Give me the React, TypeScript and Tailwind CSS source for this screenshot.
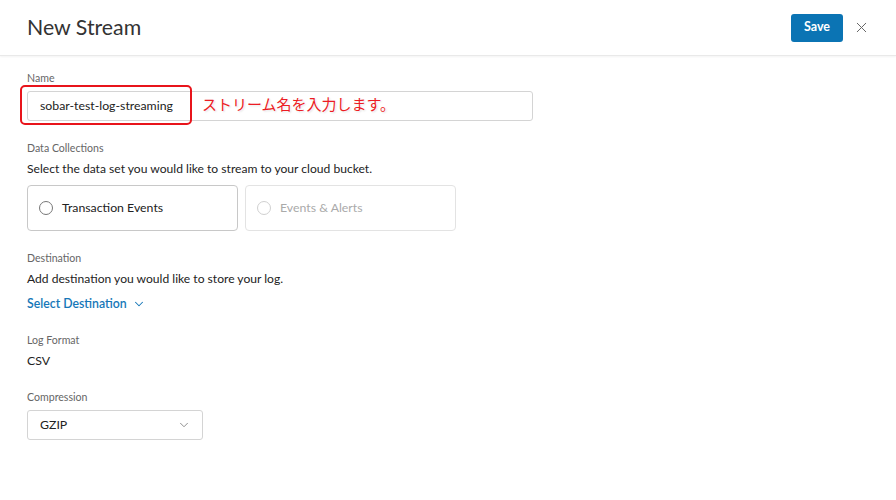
import React from "react";
import { ChevronDown, X } from "lucide-react";

const Label = ({ children }: { children: React.ReactNode }) => (
  <p className="text-[10.6px] leading-[14px] text-[#666]">{children}</p>
);

const RadioCard = ({ label, disabled }: { label: string; disabled?: boolean }) => (
  <div
    className={`w-[211px] h-[46px] rounded-[4px] border flex items-center pl-[11px] gap-x-[9px] ${
      disabled ? "border-[#e3e3e3]" : "border-[#c8c8c8]"
    }`}
  >
    <span
      className={`w-[14px] h-[14px] rounded-full border ${
        disabled ? "border-[#d0d0d0]" : "border-[#777]"
      }`}
    />
    <span className={`text-[12.3px] ${disabled ? "text-[#aaa]" : "text-[#222]"}`}>{label}</span>
  </div>
);

const App = () => {
  return (
    <div className="w-[896px] h-[500px] bg-white font-['Lato','Open_Sans',sans-serif] overflow-hidden">
      <div className="h-[56px] border-b border-[#e9e9e9] shadow-[0_1px_2px_rgba(0,0,0,0.05)] flex items-center justify-between pl-[27px] pr-[26px]">
        <p className="text-[21.3px] text-[#333] leading-none">New Stream</p>
        <div className="flex items-center gap-x-[10px]">
          <button className="w-[52px] h-[28px] rounded-[3px] bg-[#0b74b4] text-white text-[12.5px] font-bold">
            Save
          </button>
          <X className="w-[17px] h-[17px] text-[#666]" strokeWidth={1.4} />
        </div>
      </div>

      <div className="px-[27px] pt-[15px] flex flex-col">
        <Label>Name</Label>
        <div className="relative mt-[6px]">
          <div className="w-[506px] h-[30px] border border-[#d4d4d4] rounded-[3px] flex items-center pl-[12px] text-[12.3px] text-[#222]">
            sobar-test-log-streaming
          </div>
          <div className="absolute left-[-7px] top-[-6px] w-[172px] h-[40px] border-2 border-[#e8141b] rounded-[5px]" />
          <p className="absolute left-[175px] top-[3px] text-[15px] leading-[20px] text-[#ec1c24] font-['Noto_Sans_CJK_JP',sans-serif] [text-shadow:0_0_2px_#fff,0_0_3px_#fff,1px_1px_2px_rgba(0,0,0,0.15)]">
            ストリーム名を入力します。
          </p>
        </div>

        <div className="mt-[20px]">
          <Label>Data Collections</Label>
        </div>
        <p className="mt-[5px] text-[12.1px] leading-[18px] text-[#222]">
          Select the data set you would like to stream to your cloud bucket.
        </p>
        <div className="mt-[7px] flex gap-x-[7px]">
          <RadioCard label="Transaction Events" />
          <RadioCard label="Events & Alerts" disabled />
        </div>

        <div className="mt-[20px]">
          <Label>Destination</Label>
        </div>
        <p className="mt-[5px] text-[12.1px] leading-[18px] text-[#222]">
          Add destination you would like to store your log.
        </p>
        <button className="mt-[7px] flex items-center gap-x-[5px] text-[12.3px] leading-[18px] font-semibold text-[#1677b8] w-fit">
          Select Destination
          <ChevronDown className="w-[14px] h-[14px]" strokeWidth={1.8} />
        </button>

        <div className="mt-[20px]">
          <Label>Log Format</Label>
        </div>
        <p className="mt-[5px] text-[12.3px] leading-[18px] text-[#222]">CSV</p>

        <div className="mt-[20px]">
          <Label>Compression</Label>
        </div>
        <div className="mt-[6px] w-[176px] h-[30px] border border-[#d4d4d4] rounded-[3px] flex items-center justify-between pl-[12px] pr-[11px] text-[12.3px] text-[#222]">
          GZIP
          <ChevronDown className="w-[14px] h-[14px] text-[#777]" strokeWidth={1.4} />
        </div>
      </div>
    </div>
  );
};

export default App;
